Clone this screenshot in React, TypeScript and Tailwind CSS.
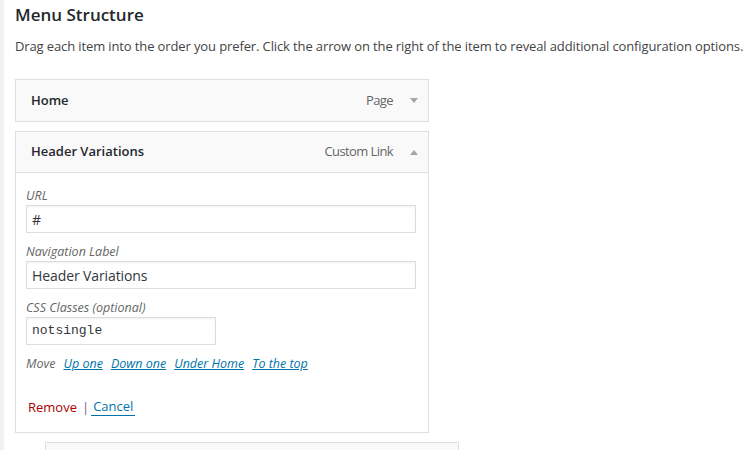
import React from "react";

function Arrow({ up }: { up?: boolean }) {
  return (
    <svg width="8" height="5" viewBox="0 0 8 5" className="ml-[17px]">
      {up ? (
        <polygon points="0,5 8,5 4,0" fill="#a0a5aa" />
      ) : (
        <polygon points="0,0 8,0 4,5" fill="#a0a5aa" />
      )}
    </svg>
  );
}

function ItemBar({ title, type, open }: { title: string; type: string; open?: boolean }) {
  return (
    <div
      className={`h-[41px] flex items-center pl-[15px] pr-[10px] bg-[#f9f9f9] ${
        open ? "border-b border-[#dfdfdf]" : ""
      }`}
    >
      <span className="text-[13px] font-semibold text-[#23282d] flex-1">{title}</span>
      <span className="text-[13px] tracking-[-0.6px] text-[#666]">{type}</span>
      <Arrow up={open} />
    </div>
  );
}

function Field({ label, value, w, mono, first }: { label: string; value: string; w: string; mono?: boolean; first?: boolean }) {
  return (
    <div className={first ? "" : "mt-[10px]"}>
      <div className="text-[12.5px] leading-[18px] italic text-[#666]">{label}</div>
      <div
        className={`${w} h-[28px] border border-[#ddd] bg-white flex items-center px-[5px] text-[#32373c] ${
          mono ? "text-[13px] font-['Liberation_Mono',monospace]" : "text-[14px] tracking-[-0.1px]"
        }`}
        style={{ boxShadow: "inset 0 1px 2px rgba(0,0,0,0.07)" }}
      >
        {value}
      </div>
    </div>
  );
}

export default function App() {
  return (
    <div className="w-[746px] h-[450px] overflow-hidden bg-white flex font-['Open_Sans',sans-serif]">
      <div className="w-[4px] shrink-0 bg-[#f1f1f1]" />
      <div className="flex-1 pl-[11px]">
        <h2 className="text-[17px] font-semibold text-[#23282d] leading-[22px] pt-[4px]">Menu Structure</h2>
        <p className="text-[13px] tracking-[-0.12px] text-[#444] leading-[20px] mt-[10px] whitespace-nowrap">
          Drag each item into the order you prefer. Click the arrow on the right of the item to reveal additional configuration options.
        </p>

        <div className="w-[414px] mt-[23px] border border-[#dfdfdf]">
          <ItemBar title="Home" type="Page" />
        </div>

        <div className="w-[414px] mt-[9px] border border-[#dfdfdf] bg-white">
          <ItemBar title="Header Variations" type="Custom Link" open />
          <div className="pl-[10px] pt-[14px] pb-[16px]">
            <Field label="URL" value="#" w="w-[390px]" first />
            <Field label="Navigation Label" value="Header Variations" w="w-[390px]" />
            <Field label="CSS Classes (optional)" value="notsingle" w="w-[190px]" mono />
            <div className="mt-[10px] text-[12.5px] leading-[17px] italic text-[#666] flex gap-[8px]">
              <span>Move</span>
              <span className="text-[#0073aa] underline">Up one</span>
              <span className="text-[#0073aa] underline">Down one</span>
              <span className="text-[#0073aa] underline">Under Home</span>
              <span className="text-[#0073aa] underline">To the top</span>
            </div>
            <div className="mt-[26px] text-[13px] leading-[18px] flex items-center pl-[2px]">
              <span className="text-[#a00]">Remove</span>
              <span className="text-[#6f5f8f] ml-[5px] mr-[2px]">|</span>
              <span className="text-[#0073aa] border-b border-[#0073aa] leading-[17px] px-[2px]">Cancel</span>
            </div>
          </div>
        </div>

        <div className="w-[414px] ml-[30px] mt-[9px] h-[40px] border border-[#dfdfdf] bg-[#f9f9f9]" />
      </div>
    </div>
  );
}
